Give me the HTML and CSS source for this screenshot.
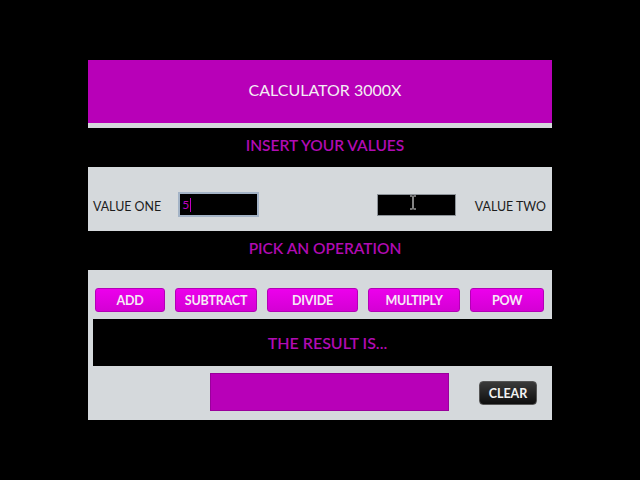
FILE: index.html
```html
<!DOCTYPE html>
<html>
<head>
<meta charset="utf-8">
<link rel="stylesheet" href="styles.css">
</head>
<body>
<div class="panel">
  <div class="header">CALCULATOR 3000X</div>
  <div class="strip"></div>
  <div class="band">INSERT YOUR VALUES</div>
  <div class="values">
    <div class="group">
      <span class="label">VALUE ONE</span>
      <div class="input focused"><span class="val">5</span><span class="caret"></span></div>
    </div>
    <div class="group">
      <div class="input plain">
        <svg class="ibeam" width="8" height="15" viewBox="0 0 8 15"><path d="M1 1h2.5M4.5 1H7M4 1.5v12M1 14h2.5M4.5 14H7" stroke="#fff" stroke-width="1.2" fill="none"/><path d="M1 1h2.5M4.5 1H7M4 1.5v12M1 14h2.5M4.5 14H7" stroke="#333" stroke-width="0.4" fill="none"/></svg>
      </div>
      <span class="label">VALUE TWO</span>
    </div>
  </div>
  <div class="band">PICK AN OPERATION</div>
  <div class="ops">
    <div class="buttons">
      <div class="btn w-add">ADD</div>
      <div class="btn w-sub">SUBTRACT</div>
      <div class="btn w-div">DIVIDE</div>
      <div class="btn w-mul">MULTIPLY</div>
      <div class="btn w-pow">POW</div>
    </div>
    <div class="result-label">THE RESULT IS...</div>
    <div class="bottom">
      <div class="result"></div>
      <div class="clear">CLEAR</div>
    </div>
  </div>
</div>
</body>
</html>
```
FILE: styles.css
```css
html, body {
  margin: 0;
  padding: 0;
  background: #000;
  width: 640px;
  height: 480px;
  overflow: hidden;
  font-family: Lato, "Liberation Sans", sans-serif;
}
.panel {
  margin: 60px 0 0 88px;
  width: 464px;
}
.header {
  height: 63px;
  background: #b800b8;
  color: #f4eef4;
  font-size: 16px;
  display: flex;
  align-items: center;
  justify-content: center;
  padding: 0 0 4px 10px;
  box-sizing: border-box;
}
.strip {
  height: 5px;
  background: #d5d9dc;
}
.band {
  height: 39px;
  background: #000;
  color: #b10bb3;
  font-size: 15.5px;
  display: flex;
  align-items: center;
  justify-content: center;
  font-weight: 600;
  padding: 0 0 5px 10px;
  box-sizing: border-box;
}
.values {
  height: 64px;
  background: #d5d9dc;
  display: flex;
  justify-content: space-between;
  align-items: flex-start;
  padding: 25px 6px 0 5px;
  box-sizing: border-box;
}
.group {
  display: flex;
  align-items: center;
  gap: 17px;
}
.group:last-child { gap: 19px; margin-top: 2px; }
.label {
  font-size: 12.4px;
  color: #1c1c1c;
  padding-top: 3px;
}
.input {
  background: #000;
  box-sizing: border-box;
  position: relative;
}
.input.focused {
  width: 81px;
  height: 25px;
  border: 2px solid #a3b3c6;
  display: flex;
  align-items: center;
  padding-left: 2px;
}
.input.plain {
  width: 79px;
  height: 22px;
  border: 1px solid #8d9399;
}
.val {
  color: #c000c0;
  font-size: 12px;
}
.caret {
  width: 1px;
  height: 14px;
  background: #c000c0;
  margin-left: 1px;
}
.ibeam {
  position: absolute;
  left: 31px;
  top: 0px;
}
.ops {
  height: 150px;
  background: #d5d9dc;
  padding-top: 18px;
  box-sizing: border-box;
}
.buttons {
  display: flex;
  gap: 10px;
  padding-left: 7px;
}
.btn {
  height: 24px;
  box-sizing: border-box;
  border-radius: 3px;
  background: linear-gradient(#ec00ec, #d400d4);
  border: 1px solid #b400b6;
  color: #f6eaf6;
  font-size: 12.5px;
  font-weight: 700;
  display: flex;
  align-items: center;
  justify-content: center;
  letter-spacing: -0.2px;
}
.w-add { width: 70px; }
.w-sub { width: 82px; }
.w-div { width: 91px; }
.w-mul { width: 92px; }
.w-pow { width: 74px; }
.result-label {
  margin: 7px 0 0 5px;
  height: 47px;
  background: #000;
  color: #b10bb3;
  font-size: 16px;
  font-weight: 600;
  display: flex;
  align-items: center;
  justify-content: center;
  padding: 0 0 0 10px;
  box-sizing: border-box;
}
.bottom {
  display: flex;
  align-items: flex-start;
  padding: 7px 0 0 122px;
}
.result {
  width: 239px;
  height: 38px;
  background: #b800b8;
  border: 1px solid #9a009c;
  box-sizing: border-box;
}
.clear {
  margin: 8px 0 0 30px;
  width: 58px;
  height: 24px;
  border-radius: 4px;
  background: linear-gradient(#3a3a3a, #0e0e0e);
  border: 1px solid #555;
  box-sizing: border-box;
  color: #f2f2f2;
  font-size: 12.5px;
  font-weight: 700;
  display: flex;
  align-items: center;
  justify-content: center;
}
```
